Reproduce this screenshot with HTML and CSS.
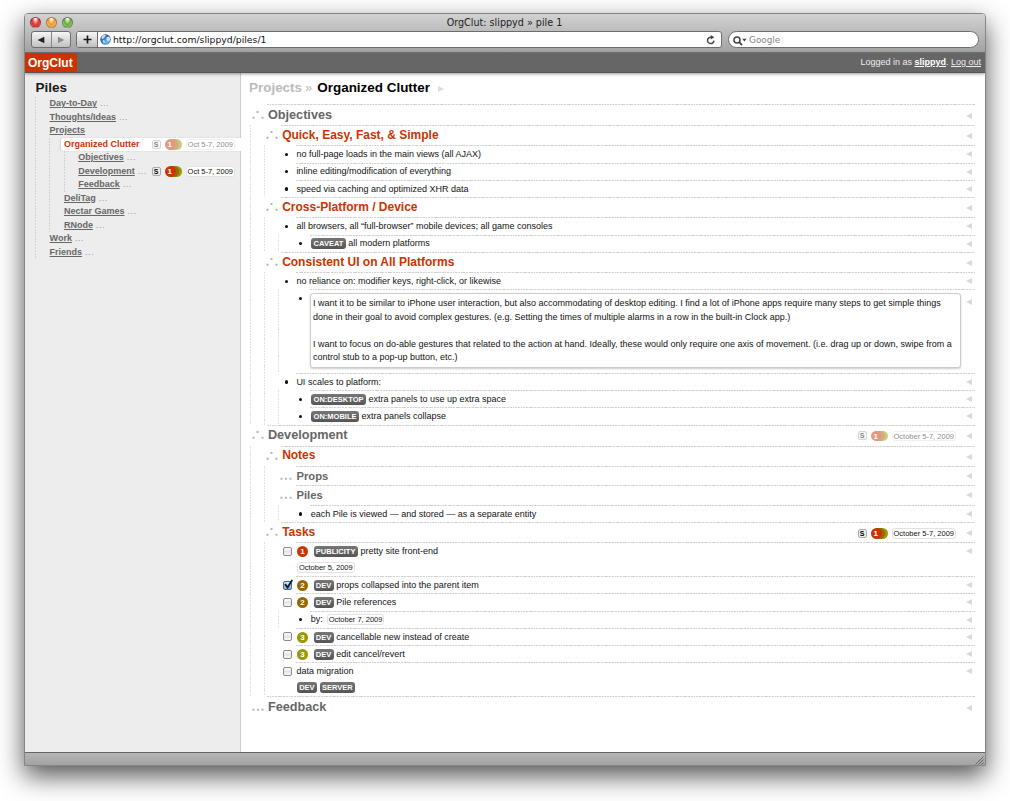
FILE: index.html
```html
<!DOCTYPE html>
<html lang="en">
<head>
<meta charset="utf-8">
<title>OrgClut: slippyd » pile 1</title>
<link rel="stylesheet" href="styles.css">
</head>
<body>
<svg class="defs" width="0" height="0">
  <symbol id="open" viewBox="0 0 12 9"><path d="M.5 6.7h2v2h-2zM4.5 1h2v2h-2zM9.5 6.7h2v2h-2z"/></symbol>
  <symbol id="more" viewBox="0 0 12 9"><path d="M.5 6.7h1.9v2H.5zM5 6.7h1.9v2H5zM9.6 6.7h1.9v2H9.6z"/></symbol>
  <symbol id="check" viewBox="0 0 12 12"><path d="M3 5.2l2.6 3.3L10.2 1" fill="none" stroke="#122" stroke-width="1.9"/></symbol>
</svg>
<div class="window">
  <header class="chrome">
    <div class="titlebar">
      <div class="lights"><i class="light red"></i><i class="light amber"></i><i class="light green"></i></div>
      <div class="wintitle">OrgClut: slippyd » pile 1</div>
    </div>
    <div class="toolbar">
      <div class="btn nav">
        <span><svg width="8" height="8" viewBox="0 0 8 8"><path d="M7.3.7v6.6L.6 4z" fill="#222"/></svg></span>
        <span><svg width="8" height="8" viewBox="0 0 8 8"><path d="M.9.7v6.6L7.4 4z" fill="#8c8c8c"/></svg></span>
      </div>
      <div class="address">
        <div class="btn plus"><svg width="9" height="9" viewBox="0 0 9 9"><path d="M4.5.5v8M.5 4.5h8" stroke="#1a1a1a" stroke-width="1.7"/></svg></div>
        <svg class="globe" width="11" height="11" viewBox="0 0 11 11"><defs><radialGradient id="g" cx=".6" cy=".75" r=".7"><stop offset="0" stop-color="#6fc0f5"/><stop offset="1" stop-color="#174f9c"/></radialGradient></defs><circle cx="5.5" cy="5.5" r="5.2" fill="url(#g)"/><path d="M1.6 2.6C3 1 5 .8 6 1.500L5 3 3.900 3.700 3 5 1.500 4.500zM6.500 3.200l2.500-.7 1.200 2-.8 2.500-1.600.4L6.500 5.500zM2.600 6l2 .8.200 1.700-1 1z" fill="#e9f5ff" opacity=".85"/></svg>
        <span class="url">http://orgclut.com/slippyd/piles/1</span>
        <svg class="reload" width="10" height="10" viewBox="0 0 10 10"><path d="M7.900 5.600A3.200 3.200 0 1 1 5.200 2.200" fill="none" stroke="#444" stroke-width="1.500"/><path d="M4.800 0v4.600L8.300 2.300z" fill="#444"/></svg>
      </div>
      <div class="search">
        <svg width="14" height="10" viewBox="0 0 14 10"><circle cx="4" cy="4" r="3" fill="none" stroke="#444" stroke-width="1.500"/><path d="M6.200 6.200L9 9.200" stroke="#444" stroke-width="1.900"/><path d="M9.200 2.800h4.400L11.400 5.600z" fill="#444"/></svg>
        <span>Google</span>
      </div>
    </div>
  </header>

  <div class="appbar">
    <div class="logo">OrgClut</div>
    <div class="login">Logged in as <a class="user">slippyd</a>. <a>Log out</a></div>
  </div>

  <div class="panes">
    <nav class="sidebar">
      <h2>Piles</h2>
      <div class="tree">
        <div class="item"><a>Day-to-Day</a><em>...</em></div>
        <div class="item"><a>Thoughts/Ideas</a><em>...</em></div>
        <div class="item"><a>Projects</a></div>
        <div class="tree">
          <div class="item current"><b>Organized Clutter</b>
            <div class="meta faded"><i class="size">S</i><i class="pill">1</i><i class="date">Oct 5-7, 2009</i></div></div>
          <div class="tree">
            <div class="item"><a>Objectives</a><em>...</em></div>
            <div class="item"><a>Development</a><em>...</em>
              <div class="meta"><i class="size">S</i><i class="pill">1</i><i class="date">Oct 5-7, 2009</i></div></div>
            <div class="item"><a>Feedback</a><em>...</em></div>
          </div>
          <div class="item"><a>DeliTag</a><em>...</em></div>
          <div class="item"><a>Nectar Games</a><em>...</em></div>
          <div class="item"><a>RNode</a><em>...</em></div>
        </div>
        <div class="item"><a>Work</a><em>...</em></div>
        <div class="item"><a>Friends</a><em>...</em></div>
      </div>
    </nav>

    <main class="main">
      <h1><span class="crumb">Projects</span><span class="sep">»</span><span>Organized Clutter</span><i class="expand"></i></h1>
      <div class="outline">
        <div class="row l0"><svg class="mark"><use href="#open"/></svg><div class="body"><h3>Objectives</h3></div></div>
        <div class="kids">
          <div class="row l1"><svg class="mark"><use href="#open"/></svg><div class="body"><h3>Quick, Easy, Fast, &amp; Simple</h3></div></div>
          <div class="kids">
            <div class="row"><i class="dot"></i><div class="body">no full-page loads in the main views (all AJAX)</div></div>
            <div class="row"><i class="dot"></i><div class="body">inline editing/modification of everything</div></div>
            <div class="row"><i class="dot"></i><div class="body">speed via caching and optimized XHR data</div></div>
          </div>
          <div class="row l1"><svg class="mark"><use href="#open"/></svg><div class="body"><h3>Cross-Platform / Device</h3></div></div>
          <div class="kids">
            <div class="row"><i class="dot"></i><div class="body">all browsers, all “full-browser” mobile devices; all game consoles</div></div>
            <div class="kids">
              <div class="row"><i class="dot"></i><div class="body"><span class="tag">CAVEAT</span>all modern platforms</div></div>
            </div>
          </div>
          <div class="row l1"><svg class="mark"><use href="#open"/></svg><div class="body"><h3>Consistent UI on All Platforms</h3></div></div>
          <div class="kids">
            <div class="row"><i class="dot"></i><div class="body">no reliance on: modifier keys, right-click, or likewise</div></div>
            <div class="kids">
              <div class="row noterow"><i class="dot"></i><div class="body"><div class="note"><p>I want it to be similar to iPhone user interaction, but also accommodating of desktop editing. I find a lot of iPhone apps require many steps to get simple things<br>done in their goal to avoid complex gestures. (e.g. Setting the times of multiple alarms in a row in the built-in Clock app.)</p><p>I want to focus on do-able gestures that related to the action at hand. Ideally, these would only require one axis of movement. (i.e. drag up or down, swipe from a<br>control stub to a pop-up button, etc.)</p></div></div></div>
            </div>
            <div class="row"><i class="dot"></i><div class="body">UI scales to platform:</div></div>
            <div class="kids">
              <div class="row"><i class="dot"></i><div class="body"><span class="tag">ON:DESKTOP</span>extra panels to use up extra space</div></div>
              <div class="row"><i class="dot"></i><div class="body"><span class="tag">ON:MOBILE</span>extra panels collapse</div></div>
            </div>
          </div>
        </div>

        <div class="row l0"><svg class="mark"><use href="#open"/></svg><div class="body"><h3>Development</h3>
          <div class="meta faded"><i class="size">S</i><i class="pill">1</i><i class="date">October 5-7, 2009</i></div></div></div>
        <div class="kids">
          <div class="row l1"><svg class="mark"><use href="#open"/></svg><div class="body"><h3>Notes</h3></div></div>
          <div class="kids">
            <div class="row l2"><svg class="mark"><use href="#more"/></svg><div class="body"><h3>Props</h3></div></div>
            <div class="row l2"><svg class="mark"><use href="#more"/></svg><div class="body"><h3>Piles</h3></div></div>
            <div class="kids">
              <div class="row"><i class="dot"></i><div class="body">each Pile is viewed — and stored — as a separate entity</div></div>
            </div>
          </div>
          <div class="row l1"><svg class="mark"><use href="#open"/></svg><div class="body"><h3>Tasks</h3>
            <div class="meta"><i class="size">S</i><i class="pill">1</i><i class="date">October 5-7, 2009</i></div></div></div>
          <div class="kids">
            <div class="row tall"><i class="box"></i><div class="body"><div class="line"><i class="num n1">1</i><span class="tag">PUBLICITY</span>pretty site front-end</div><div class="line sub"><i class="date">October 5, 2009</i></div></div></div>
            <div class="row"><i class="box on"><svg width="12" height="12"><use href="#check"/></svg></i><div class="body"><i class="num n2">2</i><span class="tag">DEV</span>props collapsed into the parent item</div></div>
            <div class="row"><i class="box"></i><div class="body"><i class="num n2">2</i><span class="tag">DEV</span>Pile references</div></div>
            <div class="kids">
              <div class="row"><i class="dot"></i><div class="body">by:<i class="date due">October 7, 2009</i></div></div>
            </div>
            <div class="row"><i class="box"></i><div class="body"><i class="num n3">3</i><span class="tag">DEV</span>cancellable new instead of create</div></div>
            <div class="row"><i class="box"></i><div class="body"><i class="num n3">3</i><span class="tag">DEV</span>edit cancel/revert</div></div>
            <div class="row tall"><i class="box"></i><div class="body"><div class="line">data migration</div><div class="line sub"><span class="tag">DEV</span><span class="tag">SERVER</span></div></div></div>
          </div>
        </div>

        <div class="row l0"><svg class="mark"><use href="#more"/></svg><div class="body"><h3>Feedback</h3></div></div>
      </div>
    </main>
  </div>
  <footer class="status"><svg width="11" height="10" viewBox="0 0 11 10"><path d="M1.500 9.500l8-8M4.500 9.500l5-5M7.500 9.500l2-2" stroke="#666" fill="none"/></svg></footer>
</div>
</body>
</html>
```
FILE: styles.css
```css
* { box-sizing: border-box; }
body {
  margin: 0;
  height: 801px;
  overflow: hidden;
  background: #fff;
  padding: 13px 24px 0;
  font: 9px/13.5px "Liberation Sans", Arial, sans-serif;
  color: #111;
}
.defs { position: absolute; }
i, em { font-style: normal; }
h1, h2, h3, p { margin: 0; }
a { text-decoration: underline; }

.window {
  width: 962px;
  height: 753px;
  display: flex;
  flex-direction: column;
  border: 1px solid #858585;
  border-radius: 4px 4px 0 0;
  overflow: hidden;
  background: #fff;
  box-shadow: 0 10px 26px rgba(0, 0, 0, .68);
}

/* browser chrome */
.chrome {
  height: 39px;
  flex: none;
  background: linear-gradient(#d2d2d2, #a2a2a2);
  font-family: "Lucida Grande", "DejaVu Sans", sans-serif;
  border-bottom: 1px solid #757575;
}
.titlebar { height: 17px; display: flex; align-items: center; padding-left: 5px; }
.lights { display: flex; gap: 5px; width: 60px; }
.light {
  width: 11px;
  height: 11px;
  border-radius: 50%;
  border: 1px solid rgba(70, 40, 30, .45);
}
.red { background: radial-gradient(ellipse at 50% 5%, #fff 5%, #e2413f 50%, #e0302f 65%, #ff9d9d 100%); }
.amber { background: radial-gradient(ellipse at 50% 5%, #fff 5%, #eb9730 50%, #f0a437 60%, #ffe58a 100%); }
.green { background: radial-gradient(ellipse at 50% 5%, #fff 5%, #66ad3c 50%, #6fb648 60%, #c6f09a 100%); }
.wintitle { flex: 1; text-align: center; padding-right: 66px; font-size: 9.600px; color: #222; }
.toolbar { display: flex; height: 17px; margin: 0 6px; }
.btn {
  display: flex;
  border: 1px solid #6d6d6d;
  border-radius: 3px;
  background: linear-gradient(#f6f6f6, #c0c0c0);
}
.btn span { flex: 1; display: flex; align-items: center; justify-content: center; }
.btn span + span { border-left: 1px solid #858585; }
.nav { width: 40px; margin-right: 5px; }
.address {
  width: 646px;
  display: flex;
  align-items: center;
  background: #fff;
  border: 1px solid #6d6d6d;
  border-radius: 3px;
  margin-right: 6px;
}
.plus {
  width: 21px;
  height: 15px;
  align-items: center;
  justify-content: center;
  border-width: 0 1px 0 0;
  border-radius: 2px 0 0 2px;
  margin-right: 2px;
}
.url { flex: 1; margin-left: 2px; font-size: 9.270px; color: #111; }
.reload { margin-right: 5px; }
.search {
  flex: 1;
  display: flex;
  align-items: center;
  gap: 2px;
  padding: 2px 0 0 4px;
  background: #fff;
  border: 1px solid #6d6d6d;
  border-radius: 9px;
  color: #858585;
  font-size: 8.900px;
}

/* application header */
.appbar {
  height: 20px;
  flex: none;
  display: flex;
  justify-content: space-between;
  align-items: center;
  background: #666;
  border-bottom: 1px solid #555;
  color: #fff;
  box-shadow: 0 1px 3px rgba(0, 0, 0, .4);
  position: relative;
}
.logo {
  width: 52px;
  height: 19px;
  padding-left: 3px;
  background: #c30;
  font: bold 12px/21px "Liberation Sans", Arial, sans-serif;
}
.login { padding-right: 4px; color: #eee; white-space: pre; }
.user { font-weight: bold; color: #fff; }

/* panes */
.panes { flex: 1; display: flex; min-height: 0; }
.sidebar {
  width: 216px;
  background: #ededed;
  border-right: 1px solid #ccc;
  padding: 7px 0 0 10px;
  color: #666;
}
.sidebar h2 { font-size: 13.500px; line-height: 17px; height: 17px; margin: -1px 0 1px .5px; color: #1a1a1a; }
.tree {
  padding-left: 14.300px;
  background: repeating-linear-gradient(#d2d2d2 0 2px, #ededed 2px 3px) 0 0 / 1px 100% no-repeat;
}
.item { height: 13.500px; display: flex; align-items: center; font-weight: bold; white-space: nowrap; }
.item > a, .item > b { margin-left: .3px; }
.item em { font-weight: normal; color: #999; margin-left: 3px; letter-spacing: .5px; }
.sidebar .meta { margin-right: 5px; }
.current {
  background: #fff;
  color: #c30;
  margin: 0 -1px 0 -3px;
  padding: 0 1px 0 3px;
  border-radius: 3px 0 0 3px;
  box-shadow: -1px 0 2px rgba(0, 0, 0, .12);
}

/* status badges */
.meta { display: flex; align-items: center; margin-left: auto; }
.faded { opacity: .5; }
.size {
  width: 9px;
  height: 9px;
  border: 1px solid #aaa;
  border-radius: 2px;
  background: #eee;
  color: #000;
  font: bold 7px/7.500px "Liberation Sans", Arial, sans-serif;
  text-align: center;
  margin-right: 4px;
}
.pill {
  width: 17px;
  height: 10.500px;
  border-radius: 6px;
  background: radial-gradient(circle at 5.200px 50%, #c30 5.200px, transparent 5.700px), radial-gradient(circle at 8.500px 50%, #960 5.200px, transparent 5.700px), #990;
  color: #fff;
  font: bold 8px/11px "Liberation Sans", Arial, sans-serif;
  padding-left: 3px;
  margin-right: 4px;
}
.date {
  height: 10.500px;
  border: 1px solid #e2e2e2;
  border-radius: 3px;
  background: #fff;
  color: #111;
  font: 7.500px/9px "Liberation Sans", Arial, sans-serif;
  padding: 0 1px;
  white-space: nowrap;
}

/* outline */
.main { flex: 1; padding: 6px 10px 0 8px; min-width: 0; }
h1 { display: flex; align-items: center; height: 18px; font-size: 13.450px; color: #000; }
.crumb { color: #bbb; }
.sep { color: #bbb; margin: 0 5px 0 3px; font-size: 13px; font-weight: normal; }
.expand { border-left: 6px solid #ddd; border-top: 3.500px solid transparent; border-bottom: 3.500px solid transparent; margin: 2px 0 0 8px; }
.outline { padding: 7.200px 0 0 .9px; }
.kids {
  padding-left: 14.250px;
  background: repeating-linear-gradient(#e0e0e0 0 1.700px, #fff 1.700px 2.700px) 0 0 / 1px 100% no-repeat;
}
.row { height: 17.250px; display: flex; position: relative; white-space: nowrap; }
.row::after {
  content: "";
  position: absolute;
  right: 3px;
  top: 6px;
  border-right: 6px solid #d9d9d9;
  border-top: 3.500px solid transparent;
  border-bottom: 3.500px solid transparent;
}
.body {
  flex: 1;
  display: flex;
  line-height: 17.250px;
  padding: .8px 0 0 .8px;
  background: repeating-linear-gradient(90deg, #d2d2d2 0 1.800px, #f4f4f4 1.800px 2.700px) 0 0 / 100% 1px no-repeat;
}
.row h3 { color: #666; }
.l0 { height: 21px; }
.l0 h3 { font-size: 12.700px; line-height: 20.500px; }
.l1 { height: 20.250px; }
.l1 h3 { font-size: 12px; line-height: 19.500px; color: #c30; }
.l2 { height: 19.500px; }
.l2 h3 { font-size: 11.250px; line-height: 19px; }
.l0::after { top: 8.500px; }
.l1::after { top: 8px; }
.l2::after { top: 7px; }
.mark { width: 12px; height: 9px; margin: 5.500px 3.200px 0 2px; fill: #b4b4b4; }
.l1 .mark, .l2 .mark { margin-top: 5px; }
.dot { width: 3.200px; height: 3.200px; border-radius: 50%; background: #111; margin: 7.500px 7.500px 0 6.500px; }
.row .meta { height: 19px; padding-top: 2px; margin-right: 19px; }
.row .meta .date { padding: 0 1px; }
.body > .tag, .line > .tag { flex: none; }
.tag {
  height: 11px;
  margin: 3px 2.700px 0 0;
  padding: 0 2.300px;
  border-radius: 3px;
  background: linear-gradient(#777, #555);
  color: #fff;
  font: bold 7.500px/11px "Liberation Sans", Arial, sans-serif;
}
.kids .dot + .body > .tag { margin-left: .7px; }
.num {
  width: 11px;
  height: 11px;
  border-radius: 50%;
  margin: 3px 5.500px 0 .7px;
  color: #fff;
  text-align: center;
  font: bold 8px/11px "Liberation Sans", Arial, sans-serif;
}
.n1 { background: #c30; }
.n2 { background: #960; }
.n3 { background: #990; }
.box {
  width: 9px;
  height: 9px;
  border: 1px solid #8a8a8a;
  border-radius: 2px;
  background: linear-gradient(#fff, #e4e4e4 50%, #fafafa);
  margin: 4.500px 3.200px 0 5px;
}
.on { background: linear-gradient(#d8e8fb, #7fb2ec); border-color: #4a6694; }
.on svg { display: block; margin: -3px 0 0 -2px; }
.tall { height: 33.750px; }
.tall .body { display: block; }
.line { display: flex; height: 17px; line-height: 17.250px; }
.sub { padding-left: .5px; }
.sub .date { margin-top: 2px; }
.sub .tag { margin-top: 2px; }
.due { margin: 3px 0 0 4px; }
.noterow { height: 83.500px; }
.noterow::after { top: 10px; }
.note {
  width: 651px;
  height: 75px;
  margin: 3px 0 0 -.7px;
  border: 1px solid #ccc;
  border-radius: 3px;
  box-shadow: 0 1px 2px rgba(0, 0, 0, .2);
  padding: 3px 2px 0;
  line-height: 13.500px;
  background: #fff;
}
.note p + p { margin-top: 13.500px; }

.status {
  height: 13px;
  flex: none;
  display: flex;
  justify-content: flex-end;
  align-items: flex-end;
  border-top: 1px solid #666;
  background: linear-gradient(#b4b4b4, #a3a3a3);
}
```
